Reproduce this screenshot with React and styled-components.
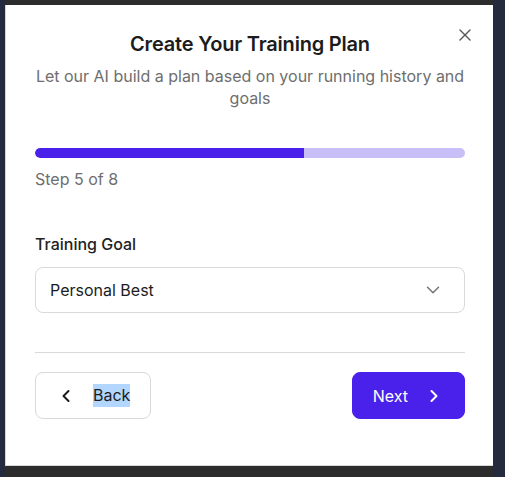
import React, { useState } from 'react';
import styled, { createGlobalStyle } from 'styled-components';

const GlobalStyle = createGlobalStyle`
    html, body {
        margin: 0;
        padding: 0;
        background: #252b3f;
    }
    body {
        font-family: Inter, "Noto Sans", "Liberation Sans", sans-serif;
        -webkit-font-smoothing: antialiased;
    }
`;

const Backdrop = styled.div`
    width: 488px;
    margin-left: 5px;
    padding: 5px 0 11px;
    background: #2c2c2c;
`;

const Modal = styled.div`
    position: relative;
    box-sizing: border-box;
    height: 461px;
    padding: 25px 28px 0 29px;
    background: #fff;
    border-left: 1px solid #d6d6d6;
    border-bottom: 1px solid #d6d6d6;
    display: flex;
    flex-direction: column;
`;

const CloseBtn = styled.button`
    position: absolute;
    top: 18px;
    right: 16px;
    width: 24px;
    height: 24px;
    padding: 0;
    border: none;
    background: none;
    color: #555;
    display: flex;
    align-items: center;
    justify-content: center;
    cursor: pointer;
`;

const Title = styled.h2`
    margin: 0;
    font-size: 20px;
    line-height: 28px;
    font-weight: 600;
    color: #1c1c1c;
    text-align: center;
    letter-spacing: -0.2px;
`;

const Subtitle = styled.p`
    margin: 7px 0 0;
    font-size: 16px;
    line-height: 22px;
    color: #6e6e6e;
    text-align: center;
`;

const Track = styled.div`
    margin-top: 39px;
    height: 10px;
    border-radius: 5px;
    background: #c8bff8;
    overflow: hidden;
`;

const Fill = styled.div`
    height: 100%;
    background: #4a21ea;
    border-radius: 5px 0 0 5px;
`;

const StepText = styled.div`
    margin-top: 9px;
    font-size: 16px;
    line-height: 24px;
    color: #6e6e6e;
`;

const Label = styled.label`
    margin-top: 41px;
    font-size: 16px;
    line-height: 24px;
    font-weight: 500;
    color: #222;
`;

const SelectBox = styled.div`
    margin-top: 11px;
    height: 46px;
    box-sizing: border-box;
    border: 1px solid #d9d9d9;
    border-radius: 8px;
    padding: 0 20px 0 14px;
    display: flex;
    align-items: center;
    justify-content: space-between;
    font-size: 16px;
    color: #1c1c1c;
`;

const Divider = styled.hr`
    margin: 39px 0 0;
    border: none;
    border-top: 1px solid #d9d9d9;
`;

const Footer = styled.div`
    margin-top: 19px;
    display: flex;
    justify-content: space-between;
`;

const Button = styled.button`
    height: 47px;
    box-sizing: border-box;
    padding: 0 20px;
    display: flex;
    align-items: center;
    gap: ${p => (p.$primary ? '16px' : '17px')};
    border-radius: 8px;
    font-family: inherit;
    font-size: 16px;
    font-weight: 400;
    cursor: pointer;
    border: 1px solid ${p => (p.$primary ? '#4a21ea' : '#d9d9d9')};
    background: ${p => (p.$primary ? '#4a21ea' : '#fff')};
    color: ${p => (p.$primary ? '#fff' : '#1c1c1c')};
`;

const Selected = styled.span`
    background: #b3d6fe;
    line-height: 23px;
`;

const Chevron = ({ dir, size = 20, color = 'currentColor', width = 2 }) => {
    const paths = {
        left: 'M12.5 5 7.5 10l5 5',
        right: 'M7.5 5l5 5-5 5',
        down: 'M5 7.5l5 5 5-5',
    };
    return (
        <svg width={size} height={size} viewBox="0 0 20 20" fill="none" stroke={color}
             strokeWidth={width} strokeLinecap="round" strokeLinejoin="round">
            <path d={paths[dir]} />
        </svg>
    );
};

const steps = 8;

const App = () => {
    const [step] = useState(5);

    return (
        <>
            <GlobalStyle />
            <Backdrop>
                <Modal>
                    <CloseBtn aria-label="Close">
                        <svg width="12" height="12" viewBox="0 0 12 12" stroke="currentColor" strokeWidth="1.4" strokeLinecap="round">
                            <path d="M1 1l10 10M11 1 1 11" />
                        </svg>
                    </CloseBtn>
                    <Title>Create Your Training Plan</Title>
                    <Subtitle>Let our AI build a plan based on your running history and goals</Subtitle>
                    <Track>
                        <Fill style={{ width: `${(step / steps) * 100}%` }} />
                    </Track>
                    <StepText>Step {step} of {steps}</StepText>
                    <Label>Training Goal</Label>
                    <SelectBox>
                        <span>Personal Best</span>
                        <Chevron dir="down" size={22} color="#777" width={1.4} />
                    </SelectBox>
                    <Divider />
                    <Footer>
                        <Button>
                            <Chevron dir="left" />
                            <Selected>Back</Selected>
                        </Button>
                        <Button $primary>
                            Next
                            <Chevron dir="right" />
                        </Button>
                    </Footer>
                </Modal>
            </Backdrop>
        </>
    );
};

export default App;
